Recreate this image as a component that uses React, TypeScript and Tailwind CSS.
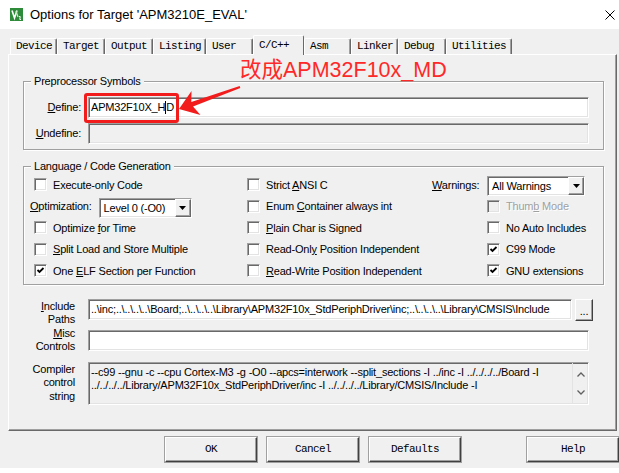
import React from "react";

const sunken =
  "border border-t-[#a0a0a0] border-l-[#a0a0a0] border-b-white border-r-white shadow-[inset_1px_1px_0_#696969,inset_-1px_-1px_0_#e3e3e3]";
const raised =
  "border border-t-white border-l-white border-b-[#696969] border-r-[#696969] shadow-[inset_-1px_-1px_0_#a0a0a0]";

const U = ({ children }: { children: React.ReactNode }) => (
  <span className="underline underline-offset-[1px]">{children}</span>
);

function Check({ checked = false, disabled = false }: { checked?: boolean; disabled?: boolean }) {
  return (
    <span
      className={`flex items-center justify-center w-[13px] h-[13px] shrink-0 ${sunken} ${
        disabled ? "bg-[#f0f0f0]" : "bg-white"
      }`}
    >
      {checked && (
        <svg width="9" height="9" viewBox="0 0 9 9">
          <path d="M1.5 4 L3.5 6 L7.5 2" fill="none" stroke="#000" strokeWidth="1.8" />
        </svg>
      )}
    </span>
  );
}

function CheckRow({
  children,
  checked,
  disabled,
}: {
  children: React.ReactNode;
  checked?: boolean;
  disabled?: boolean;
}) {
  return (
    <div className="flex items-center gap-[6px] h-[21.5px]">
      <Check checked={checked} disabled={disabled} />
      <span className={disabled ? "text-[#a0a0a0] [text-shadow:1px_1px_0_#fff]" : ""}>{children}</span>
    </div>
  );
}

function Select({ value, className }: { value: string; className: string }) {
  return (
    <div className={`flex h-[20px] bg-white ${sunken} ${className}`}>
      <span className="flex-1 pl-[4px] leading-[18px] whitespace-nowrap">{value}</span>
      <span className={`w-[16px] h-full bg-[#f0f0f0] flex items-center justify-center ${raised}`}>
        <svg width="7" height="4" viewBox="0 0 7 4">
          <path d="M0 0H7L3.5 4Z" fill="#000" />
        </svg>
      </span>
    </div>
  );
}

const tabs: { name: string; w: string; active?: boolean }[] = [
  { name: "Device", w: "w-[47px]" },
  { name: "Target", w: "w-[48px]" },
  { name: "Output", w: "w-[48px]" },
  { name: "Listing", w: "w-[53px]" },
  { name: "User", w: "w-[47px]" },
  { name: "C/C++", w: "w-[51px]", active: true },
  { name: "Asm", w: "w-[47px]" },
  { name: "Linker", w: "w-[47px]" },
  { name: "Debug", w: "w-[48px]" },
  { name: "Utilities", w: "w-[66px]" },
];

const includePaths = String.raw`..\inc;..\..\..\..\Board;..\..\..\..\Library\APM32F10x_StdPeriphDriver\inc;..\..\..\..\Library\CMSIS\Include`;

const mono = "font-['Liberation_Mono',monospace] text-[11px] tracking-[-0.6px]";

export default function App() {
  return (
    <div className="relative w-[619px] h-[473px] bg-white overflow-hidden text-black font-['Liberation_Sans',Arial,sans-serif] text-[11px] tracking-[-0.2px]">
      <div className="h-[468px] flex flex-col">
        {/* title bar */}
        <div className="h-[29px] shrink-0 flex items-center pl-[10px] bg-white">
          <svg width="13" height="13" viewBox="0 0 13 13">
            <rect width="13" height="13" fill="#2e8b3a" />
            <path d="M2 2.5 L4.5 10 L7 2.5" fill="none" stroke="#fff" strokeWidth="1.6" />
            <path d="M6 3 L8 9" fill="none" stroke="#cfe8c8" strokeWidth="1.2" />
            <path d="M9 8.5 Q11 8 10 10 Q9 12 11 11.5" fill="none" stroke="#fff" strokeWidth="1" />
          </svg>
          <span className="ml-[7px] text-[13px] tracking-normal">Options for Target 'APM3210E_EVAL'</span>
          <svg className="ml-auto mr-[4px]" width="10" height="10" viewBox="0 0 10 10">
            <path d="M0.5 0.5 L9.5 9.5 M9.5 0.5 L0.5 9.5" stroke="#000" strokeWidth="1" />
          </svg>
        </div>

        <div className="flex-1 bg-[#f0f0f0] flex flex-col">
          {/* tabs */}
          <div className="h-[25px] shrink-0 flex items-end pl-[10px]">
            {tabs.map((t) =>
              t.active ? (
                <div
                  key={t.name}
                  className={`${t.w} h-[20px] -mb-[1px] relative z-10 bg-[#f0f0f0] rounded-t-[2px] border-t border-l border-r border-t-white border-l-white border-r-[#696969] pl-[5px] pt-[2px] leading-[14px] ${mono}`}
                >
                  {t.name}
                </div>
              ) : (
                <div
                  key={t.name}
                  className={`${t.w} h-[16px] rounded-t-[2px] border-t border-l border-r border-t-white border-l-white border-r-[#696969] shadow-[inset_-1px_0_0_#a0a0a0] pl-[5px] leading-[15px] ${mono}`}
                >
                  {t.name}
                </div>
              )
            )}
          </div>

          {/* panel */}
          <div className="ml-[8px] w-[609px] h-[377px] shrink-0 border border-t-white border-l-white border-b-[#696969] border-r-[#696969] shadow-[inset_-1px_-1px_0_#a0a0a0] flex flex-col">
            <fieldset className="ml-[14px] mt-[20px] w-[581px] border border-[#a0a0a0] shadow-[inset_1px_1px_0_#fff,1px_1px_0_#fff] pt-[9px] pb-[5px]">
              <legend className="ml-[7px] px-[3px] leading-[13px] bg-[#f0f0f0]">Preprocessor Symbols</legend>
              <div className="flex flex-col gap-[5px]">
                <div className="flex items-center gap-[7px] pr-[14px]">
                  <span className="w-[57px] text-right">
                    <U>D</U>efine:
                  </span>
                  <div className={`flex-1 h-[21px] bg-white ${sunken} pl-[2px] leading-[19px] flex items-center`}>
                    APM32F10X_H<span className="inline-block w-px h-[13px] bg-black" />D
                  </div>
                </div>
                <div className="flex items-center gap-[7px] pr-[14px]">
                  <span className="w-[57px] text-right">
                    <U>U</U>ndefine:
                  </span>
                  <div className={`flex-1 h-[21px] bg-[#f0f0f0] ${sunken}`} />
                </div>
              </div>
            </fieldset>

            <fieldset className="ml-[14px] mt-[10px] w-[581px] border border-[#a0a0a0] shadow-[inset_1px_1px_0_#fff,1px_1px_0_#fff] pt-[1px] pb-[2px] pl-[6px]">
              <legend className="ml-[1px] px-[3px] leading-[13px] bg-[#f0f0f0]">Language / Code Generation</legend>
              <div className="grid grid-cols-[217px_185px_1fr]">
                <div className="flex flex-col pl-[4px]">
                  <CheckRow>Execute-only Code</CheckRow>
                  <div className="flex items-center h-[21.5px] -ml-[4px]">
                    <span>
                      <U>O</U>ptimization:
                    </span>
                    <Select value="Level 0 (-O0)" className="ml-[7px] w-[93px] mt-[3px]" />
                  </div>
                  <CheckRow>
                    Optimize <U>f</U>or Time
                  </CheckRow>
                  <CheckRow>
                    <U>S</U>plit Load and Store Multiple
                  </CheckRow>
                  <CheckRow checked>
                    One <U>E</U>LF Section per Function
                  </CheckRow>
                </div>
                <div className="flex flex-col">
                  <CheckRow>
                    Strict <U>A</U>NSI C
                  </CheckRow>
                  <CheckRow>
                    Enum <U>C</U>ontainer always int
                  </CheckRow>
                  <CheckRow>
                    <U>P</U>lain Char is Signed
                  </CheckRow>
                  <CheckRow>
                    Read-Onl<U>y</U> Position Independent
                  </CheckRow>
                  <CheckRow>
                    <U>R</U>ead-Write Position Independent
                  </CheckRow>
                </div>
                <div className="flex flex-col">
                  <div className="flex items-center h-[21.5px]">
                    <span className="w-[55px]">
                      <U>W</U>arnings:
                    </span>
                    <Select value="All Warnings" className="w-[98px] mt-[2px]" />
                  </div>
                  <div className="pl-[55px] flex flex-col">
                    <CheckRow disabled>
                      Thum<U>b</U> Mode
                    </CheckRow>
                    <CheckRow>No Auto Includes</CheckRow>
                    <CheckRow checked>C99 Mode</CheckRow>
                    <CheckRow checked>GNU extensions</CheckRow>
                  </div>
                </div>
              </div>
            </fieldset>

            {/* include paths */}
            <div className="flex items-center mt-[14px] h-[22px]">
              <div className="w-[66px] text-right leading-[12.5px] mt-[6px]">
                <U>I</U>nclude
                <br />
                Paths
              </div>
              <div className={`ml-[13px] w-[484px] h-[21px] bg-white ${sunken} pl-[2px] leading-[19px] overflow-hidden whitespace-nowrap`}>
                {includePaths}
              </div>
              <div className={`ml-[3px] w-[18px] h-[22px] bg-[#f0f0f0] border border-t-white border-l-white border-b-[#404040] border-r-[#404040] shadow-[inset_-1px_-1px_0_#a0a0a0] flex items-end justify-center pb-[3px] leading-none`}>
                ...
              </div>
            </div>

            {/* misc controls */}
            <div className="flex items-center mt-[9px] h-[21px]">
              <div className="w-[66px] text-right leading-[13px]">
                <U>M</U>isc
                <br />
                Controls
              </div>
              <div className={`ml-[13px] w-[501px] h-[21px] bg-white ${sunken}`} />
            </div>

            {/* compiler control string */}
            <div className="flex items-center mt-[11px] h-[43px]">
              <div className="w-[66px] text-right leading-[13.5px]">
                Compiler
                <br />
                control
                <br />
                string
              </div>
              <div className={`ml-[13px] w-[501px] h-[43px] bg-[#f0f0f0] ${sunken} flex`}>
                <div className="flex-1 pl-[2px] pt-[3px] leading-[13.5px] whitespace-nowrap overflow-hidden">
                  --c99 --gnu -c --cpu Cortex-M3 -g -O0 --apcs=interwork --split_sections -I ../inc -I ../../../../Board -I
                  <br />
                  ../../../../Library/APM32F10x_StdPeriphDriver/inc -I ../../../../Library/CMSIS/Include -I
                </div>
                <div className="w-[16px] flex flex-col items-center justify-between py-[9px] border-l border-[#e3e3e3]">
                  <svg width="8" height="5" viewBox="0 0 8 5">
                    <path d="M0.5 4.5 L4 1 L7.5 4.5" fill="none" stroke="#606060" strokeWidth="1.3" />
                  </svg>
                  <svg width="8" height="5" viewBox="0 0 8 5">
                    <path d="M0.5 0.5 L4 4 L7.5 0.5" fill="none" stroke="#606060" strokeWidth="1.3" />
                  </svg>
                </div>
              </div>
            </div>
          </div>

          {/* buttons */}
          <div className={`flex mt-[6px] pl-[165px] gap-[10px] ${mono}`}>
            {["OK", "Cancel", "Defaults"].map((b) => (
              <div
                key={b}
                className="w-[92px] h-[25px] bg-[#f0f0f0] border border-t-white border-l-white border-b-[#404040] border-r-[#404040] shadow-[inset_-1px_-1px_0_#a0a0a0,0_0_0_1px_#a0a0a0] flex items-center justify-center"
              >
                {b}
              </div>
            ))}
            <div className="ml-[56px] w-[92px] h-[25px] bg-[#f0f0f0] border border-t-white border-l-white border-b-[#404040] border-r-[#404040] shadow-[inset_-1px_-1px_0_#a0a0a0,0_0_0_1px_#a0a0a0] flex items-center justify-center">
              Help
            </div>
          </div>
        </div>
      </div>

      {/* annotation */}
      <div className="absolute left-[240px] top-[59px] text-[21.5px] leading-[22px] tracking-normal text-[#ff2828] font-['Liberation_Sans','Noto_Sans_CJK_SC',sans-serif] whitespace-nowrap">
        改成APM32F10x_MD
      </div>
      <div className="absolute left-[84px] top-[93px] w-[95px] h-[30px] border-[3px] border-[#f21c1c] rounded-[3px]" />
      <svg className="absolute left-[175px] top-[82px]" width="70" height="45" viewBox="175 82 70 45">
        <polygon
          points="179,109 200.5,115 193,106.6 240.3,88 239.7,86 191.3,101.9 191.5,91"
          fill="#f21c1c"
        />
      </svg>
    </div>
  );
}
